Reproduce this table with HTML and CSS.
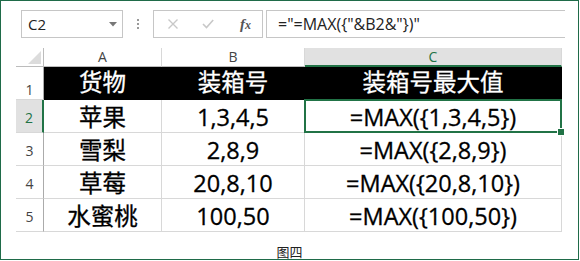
FILE: index.html
```html
<!DOCTYPE html>
<html lang="zh">
<head>
<meta charset="utf-8">
<link rel="stylesheet" href="styles.css">
</head>
<body>
<div class="frame">
  <div class="toolbar">
    <div class="namebox">
      <span class="name">C2</span>
      <svg class="caret" width="8" height="5" viewBox="0 0 8 5"><path d="M0 0H8L4 4.5Z" fill="#777"/></svg>
    </div>
    <div class="grip"><i></i><i></i><i></i></div>
    <div class="fbtns">
      <svg class="ico" width="12" height="10" viewBox="0 0 12 10"><path d="M1.5 0.5L10.5 9.5M10.5 0.5L1.5 9.5" stroke="#c8c8c8" stroke-width="1.4" fill="none"/></svg>
      <svg class="ico" width="12" height="10" viewBox="0 0 12 10"><path d="M1 5L4.5 8.6L11.2 1" stroke="#c8c8c8" stroke-width="1.6" fill="none"/></svg>
      <span class="fx"><i>f</i><i class="x">x</i></span>
    </div>
    <div class="fbar">="=MAX({"&amp;B2&amp;"})"</div>
  </div>

  <div class="sheet">
    <div class="hc corner"><svg width="14" height="14" viewBox="0 0 14 14"><path d="M13 0V13H0Z" fill="#dcdcdc"/></svg></div>
    <div class="hc">A</div>
    <div class="hc">B</div>
    <div class="hc hc-sel">C</div>

    <div class="rh rh1">1</div>
    <div class="c top">货物</div>
    <div class="c top">装箱号</div>
    <div class="c top">装箱号最大值</div>

    <div class="rh rh-sel">2</div>
    <div class="c">苹果</div>
    <div class="c">1,3,4,5</div>
    <div class="c sel">=MAX({1,3,4,5})</div>

    <div class="rh">3</div>
    <div class="c">雪梨</div>
    <div class="c">2,8,9</div>
    <div class="c">=MAX({2,8,9})</div>

    <div class="rh">4</div>
    <div class="c">草莓</div>
    <div class="c">20,8,10</div>
    <div class="c">=MAX({20,8,10})</div>

    <div class="rh">5</div>
    <div class="c">水蜜桃</div>
    <div class="c">100,50</div>
    <div class="c">=MAX({100,50})</div>
  </div>

  <div class="caption">图四</div>
</div>
</body>
</html>
```

FILE: styles.css
```css
* { box-sizing: border-box; }
html, body { margin: 0; padding: 0; background: #fff; }

.frame {
  width: 579px;
  height: 260px;
  border: 1px solid #1f6b49;
  padding-top: 9px;
  font-family: "Open Sans", "Noto Sans CJK SC", sans-serif;
  color: #000;
}

.toolbar {
  display: flex;
  height: 28px;
  padding-left: 20px;
}

.namebox {
  width: 102px;
  height: 28px;
  border: 1px solid #c6c6c6;
  display: flex;
  align-items: center;
  justify-content: space-between;
  padding: 0 5px 0 6px;
}
.name { font-size: 15px; color: #222; line-height: 1; }
.caret { margin-top: 1px; }

.grip {
  width: 30px;
  display: flex;
  flex-direction: column;
  align-items: center;
  justify-content: center;
  gap: 2px;
}
.grip i { display: block; width: 2px; height: 2px; background: #9a9a9a; }

.fbtns {
  width: 110px;
  height: 28px;
  border: 1px solid #c6c6c6;
  display: flex;
  align-items: center;
  padding-left: 13px;
  gap: 23px;
}
.ico { display: block; }
.fx {
  font-family: "Liberation Serif", serif;
  font-size: 15px;
  color: #555;
  font-weight: bold;
  line-height: 1;
  margin-left: 3px;
}
.fx .x { font-size: 12px; }

.fbar {
  margin-left: 3px;
  width: 299px;
  height: 28px;
  border: 1px solid #c6c6c6;
  border-right: none;
  font-size: 16px;
  line-height: 26px;
  padding-left: 11px;
  color: #222;
  white-space: nowrap;
}

.sheet {
  margin: 10px 0 0 15px;
  display: grid;
  grid-template-columns: 28px 118px 143px 257px;
  grid-template-rows: 19px repeat(5, 33px);
  width: 546px;
}

.hc {
  border-right: 1px solid #d8d8d8;
  border-bottom: 1px solid #bcbcbc;
  font-size: 14px;
  color: #444;
  display: flex;
  justify-content: center;
  align-items: flex-end;
  line-height: 1;
  padding-bottom: 2px;
}
.corner { justify-content: flex-end; padding: 0 1px 1px 0; border-right-color: #bcbcbc; }
.corner svg { display: block; }
.hc-sel {
  background: #e1e1e1;
  color: #217346;
  border-bottom: 2px solid #217346;
  padding-bottom: 1px;
}

.rh {
  border-right: 1px solid #ababab;
  border-bottom: 1px solid #d8d8d8;
  font-size: 14px;
  color: #444;
  display: flex;
  justify-content: center;
  align-items: flex-end;
  line-height: 1;
  padding-bottom: 7px;
}
.rh1 { padding-bottom: 2px; }
.rh-sel {
  background: #e1e1e1;
  color: #217346;
  border-right: 2px solid #217346;
}

.c {
  border-right: 1px solid #d8d8d8;
  border-bottom: 1px solid #d8d8d8;
  font-size: 23.5px;
  line-height: 1;
  display: flex;
  justify-content: center;
  align-items: center;
  padding-top: 3px;
  white-space: nowrap;
  position: relative;
  -webkit-text-stroke: 0.3px #000;
}
.c.top {
  background: #000;
  color: #fff;
  border-color: #000;
  padding-top: 0;
  -webkit-text-stroke: 0.3px #fff;
}

.sel::after {
  content: "";
  position: absolute;
  left: -1px;
  top: -1px;
  right: -1px;
  bottom: -1px;
  border: 2px solid #217346;
}
.sel::before {
  content: "";
  position: absolute;
  right: -4px;
  bottom: -4px;
  width: 6px;
  height: 6px;
  background: #217346;
  border: 1px solid #fff;
  z-index: 1;
}

.caption {
  margin-top: 13px;
  text-align: center;
  font-family: "Noto Sans CJK SC", sans-serif;
  font-size: 13px;
  line-height: 14px;
  color: #222;
}
```
